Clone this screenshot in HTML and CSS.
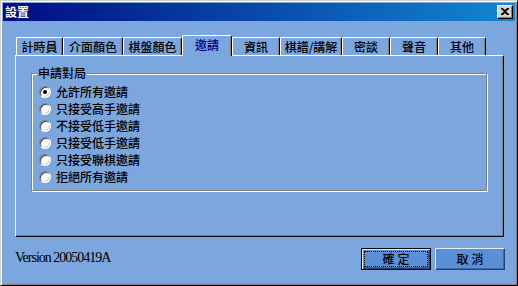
FILE: index.html
```html
<!DOCTYPE html>
<html lang="zh-Hant">
<head>
<meta charset="utf-8">
<title>設置</title>
<link rel="stylesheet" href="styles.css">
</head>
<body>
<div class="window">
  <div class="titlebar">
    <span class="title">設置</span>
    <span class="close"><svg width="8" height="7" viewBox="0 0 8 7"><path d="M0 0h2l2 2 2-2h2v1L5 3.5 8 6v1H6L4 5 2 7H0V6l3-2.5L0 1z" fill="#000"/></svg></span>
  </div>
  <div class="content">
    <div class="tabs">
      <div class="tab tab-w47">計時員</div>
      <div class="tab tab-w60">介面顏色</div>
      <div class="tab tab-w59">棋盤顏色</div>
      <div class="tab tab-w50 tab-active">邀請</div>
      <div class="tab">資訊</div>
      <div class="tab tab-w62">棋譜/講解</div>
      <div class="tab">密談</div>
      <div class="tab">聲音</div>
      <div class="tab">其他</div>
    </div>
    <div class="panel">
      <div class="group">
        <span class="group-title">申請對局</span>
        <div class="option"><span class="radio radio-on"></span><span class="label">允許所有邀請</span></div>
        <div class="option"><span class="radio"></span><span class="label">只接受高手邀請</span></div>
        <div class="option"><span class="radio"></span><span class="label">不接受低手邀請</span></div>
        <div class="option"><span class="radio"></span><span class="label">只接受低手邀請</span></div>
        <div class="option"><span class="radio"></span><span class="label">只接受聯棋邀請</span></div>
        <div class="option"><span class="radio"></span><span class="label">拒絕所有邀請</span></div>
      </div>
    </div>
    <div class="footer">
      <span class="version">Version 20050419A</span>
      <div class="buttons">
        <button class="btn btn-default">確定</button>
        <button class="btn">取消</button>
      </div>
    </div>
  </div>
</div>
</body>
</html>
```
FILE: styles.css
```css
html, body {
  margin: 0;
  padding: 0;
  background: #7ba6de;
}
body {
  font-family: "Noto Sans CJK TC", "Noto Sans", sans-serif;
  font-size: 12px;
  font-weight: 500;
  line-height: 12px;
  color: #000;
}
.window {
  width: 518px;
  height: 286px;
  box-sizing: border-box;
  background: #7ba6de;
  border: 1px solid;
  border-color: #d4d0c8 #000 #000 #d4d0c8;
  box-shadow: inset 1px 1px #fff, inset -1px -1px #808080;
  padding: 2px;
}
.titlebar {
  height: 18px;
  display: flex;
  align-items: center;
  justify-content: space-between;
  padding: 0 2px 0 2px;
  background: linear-gradient(to right, #000c80, #1287d3);
}
.title {
  color: #fff;
  font-weight: bold;
  font-size: 12px;
  line-height: 12px;
}
.close {
  width: 16px;
  height: 14px;
  box-sizing: border-box;
  background: #d4d0c8;
  border: 1px solid;
  border-color: #fff #000 #000 #fff;
  box-shadow: inset -1px -1px #808080;
  display: flex;
  align-items: center;
  justify-content: center;
}
.close svg { display: block; margin: 0 1px 1px 0; }
.content {
  padding: 14px 11px 0 12px;
}
.tabs {
  display: flex;
  align-items: flex-end;
  height: 20px;
  padding-left: 1px;
  position: relative;
  z-index: 1;
}
.tab {
  width: 48px;
  height: 18px;
  box-sizing: border-box;
  border-left: 1px solid #fff;
  border-top: 1px solid #fff;
  border-right: 1px solid #000;
  border-top-left-radius: 2px;
  border-top-right-radius: 2px;
  box-shadow: inset -1px 0 #808080;
  display: flex;
  align-items: center;
  justify-content: center;
  padding-top: 1px;
}
.tab-w47 { width: 47px; }
.tab-w50 { width: 50px; }
.tab-w59 { width: 59px; }
.tab-w60 { width: 60px; }
.tab-w62 { width: 62px; }
.tab-active {
  height: 21px;
  margin-bottom: -1px;
  background: #7ba6de;
  color: #000080;
  padding-top: 0;
  padding-bottom: 2px;
}
.panel {
  height: 182px;
  box-sizing: border-box;
  border: 1px solid;
  border-color: #fff #000 #000 #fff;
  box-shadow: inset -1px -1px #808080;
  padding: 17px 16px 0 15px;
}
.group {
  position: relative;
  height: 118px;
  box-sizing: border-box;
  border: 1px solid #808080;
  box-shadow: inset 1px 1px #fff, 1px 1px #fff;
  padding: 9px 0 5px 7px;
}
.group-title {
  position: absolute;
  top: -7px;
  left: 5px;
  padding: 0 1px;
  background: #7ba6de;
  line-height: 12px;
}
.option {
  height: 17px;
  display: flex;
  align-items: center;
}
.radio {
  width: 12px;
  height: 12px;
  box-sizing: border-box;
  border-radius: 50%;
  border: 1px solid;
  border-color: #808080 #fff #fff #808080;
  box-shadow: inset 1px 1px #404040, inset -1px -1px #d4d0c8;
  background: #fff;
  display: flex;
  align-items: center;
  justify-content: center;
}
.radio-on::after {
  content: "";
  width: 4px;
  height: 4px;
  border-radius: 50%;
  background: #000;
}
.label {
  margin-left: 5px;
}
.footer {
  margin-top: 11px;
  display: flex;
  align-items: center;
  justify-content: space-between;
}
.version {
  font-family: "Liberation Serif", serif;
  font-weight: normal;
  font-size: 14px;
  letter-spacing: -1px;
  line-height: 14px;
  margin-top: -2px;
}
.buttons {
  display: flex;
  gap: 4px;
  margin-right: -1px;
}
.btn {
  position: relative;
  width: 70px;
  height: 22px;
  box-sizing: border-box;
  margin: 0;
  padding: 0;
  font-family: "Noto Sans CJK TC", "Noto Sans", sans-serif;
  font-size: 12px;
  font-weight: 500;
  line-height: 12px;
  letter-spacing: 3px;
  text-indent: 3px;
  color: #000;
  background: #5b8fd8;
  border: 1px solid;
  border-color: #e6ecf5 #2a426a #2a426a #e6ecf5;
  box-shadow: inset -1px -1px #3f67a4;
}
.btn-default {
  border: 1px solid #000;
  box-shadow: inset 1px 1px #e6ecf5, inset -1px -1px #2a426a, inset -2px -2px #3f67a4;
}
.btn-default::after {
  content: "";
  position: absolute;
  top: 2px;
  left: 2px;
  right: 2px;
  bottom: 2px;
  border: 1px dotted #000;
}
```
